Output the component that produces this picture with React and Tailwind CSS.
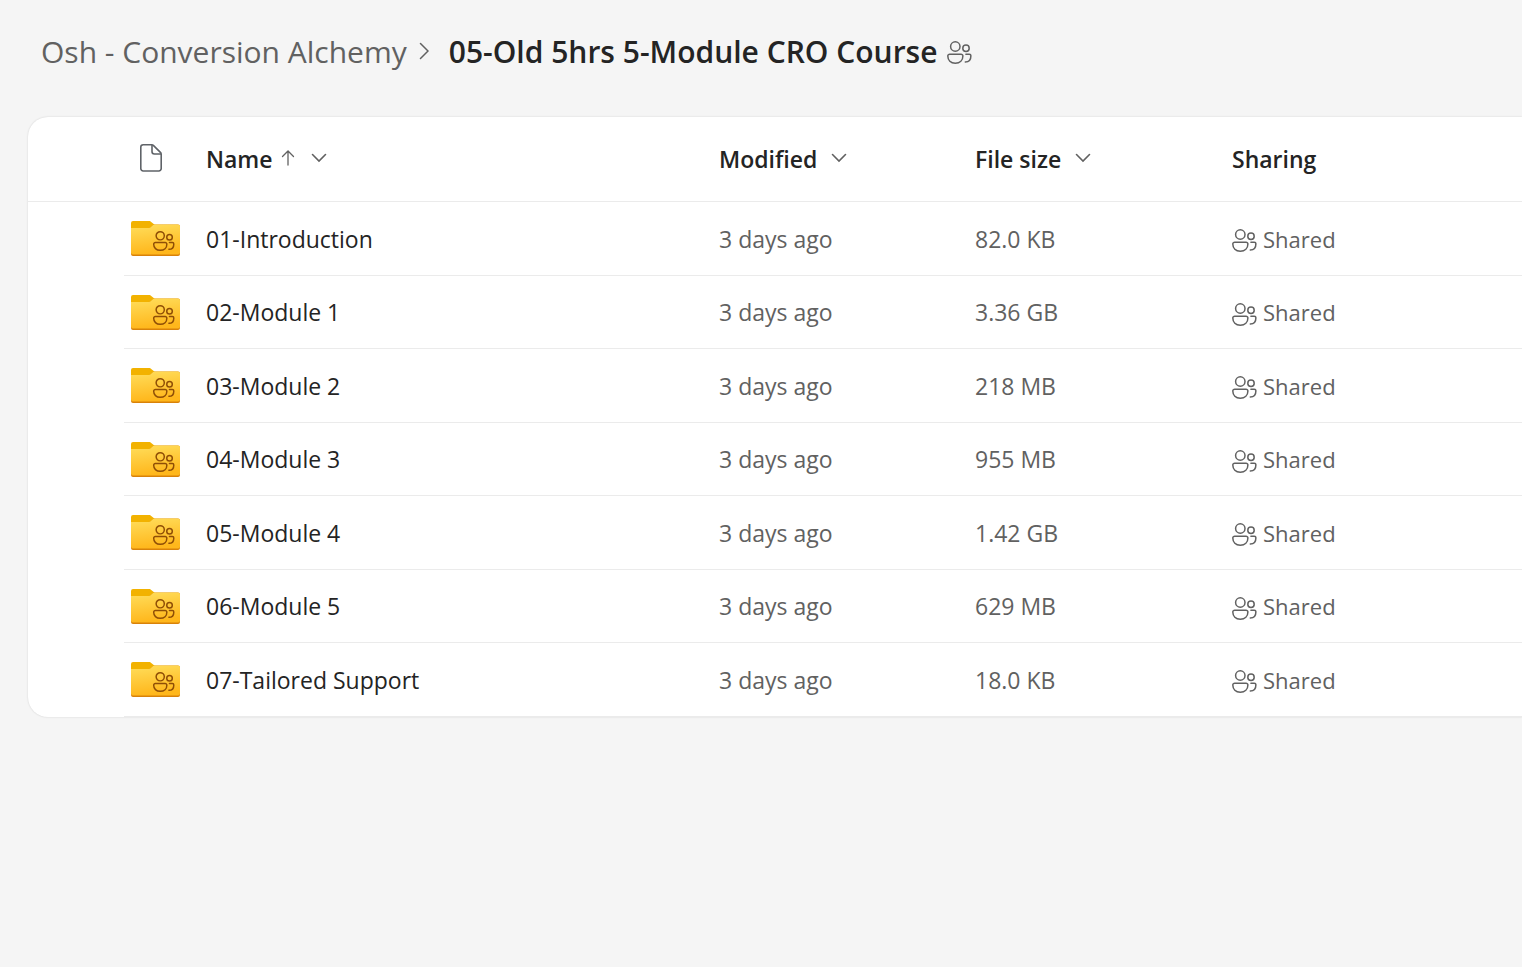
import React from 'react'

const folders = [
  { name: '01-Introduction', modified: '3 days ago', size: '82.0 KB' },
  { name: '02-Module 1', modified: '3 days ago', size: '3.36 GB' },
  { name: '03-Module 2', modified: '3 days ago', size: '218 MB' },
  { name: '04-Module 3', modified: '3 days ago', size: '955 MB' },
  { name: '05-Module 4', modified: '3 days ago', size: '1.42 GB' },
  { name: '06-Module 5', modified: '3 days ago', size: '629 MB' },
  { name: '07-Tailored Support', modified: '3 days ago', size: '18.0 KB' },
]

function PeoplePaths() {
  return (
    <>
      <circle cx="8.3" cy="5.5" r="4.7" />
      <circle cx="19" cy="7.2" r="3.2" />
      <path d="M2.7 13.2H14a1.9 1.9 0 0 1 1.9 1.9c0 4.2-3 7.1-7.6 7.1S.8 19.3.8 15.1a1.9 1.9 0 0 1 1.9-1.9z" />
      <path d="M18.9 13.2h3.4a1.6 1.6 0 0 1 1.6 1.6c0 3.9-2.1 6.3-5.6 6.3" />
    </>
  )
}

function PeopleIcon() {
  return (
    <svg viewBox="0 0 25 23" className="w-[25px] h-[23px] shrink-0" fill="none" stroke="currentColor" strokeWidth="1.5" strokeLinecap="round" aria-hidden="true">
      <PeoplePaths />
    </svg>
  )
}

function FolderIcon() {
  return (
    <svg viewBox="0 0 49 35" className="block w-[49px] h-[35px]" aria-hidden="true">
      <defs>
        <linearGradient id="folderBody" x1="0" y1="0" x2="0.2" y2="1">
          <stop offset="0" stopColor="#ffde5c" />
          <stop offset="1" stopColor="#ffb71c" />
        </linearGradient>
      </defs>
      <path d="M0 2a2 2 0 0 1 2-2h16c1 0 1.5.3 2.2.9L24 4v8H0z" fill="#f2b200" />
      <path d="M0 7h17c1.3 0 2-.3 2.9-1.1l1.6-1.5c.7-.6 1.3-.9 2.3-.9H47a2 2 0 0 1 2 2V33a2 2 0 0 1-2 2H2a2 2 0 0 1-2-2z" fill="#d98209" />
      <path d="M0 7h17c1.3 0 2-.3 2.9-1.1l1.6-1.5c.7-.6 1.3-.9 2.3-.9H47a2 2 0 0 1 2 2v26a2 2 0 0 1-2 2H2a2 2 0 0 1-2-2z" fill="url(#folderBody)" />
      <g transform="translate(22 10) scale(.87)" fill="none" stroke="#8f4e06" strokeWidth="1.7" strokeLinecap="round">
        <PeoplePaths />
      </g>
    </svg>
  )
}

function FileIcon() {
  return (
    <svg viewBox="0 0 22 28" className="block w-[22px] h-[28px]" fill="none" stroke="#5f6368" strokeWidth="1.6" strokeLinejoin="round" aria-hidden="true">
      <path d="M3.2.8h8.6c.7 0 1.3.3 1.8.8l6.8 6.8c.5.5.8 1.1.8 1.8v14.4a2.4 2.4 0 0 1-2.4 2.4H3.2a2.4 2.4 0 0 1-2.4-2.4V3.2A2.4 2.4 0 0 1 3.2.8z" />
      <path d="M12 1v6.600A2.400 2.400 0 0 0 14.400 10H21" />
    </svg>
  )
}

function ChevronDownIcon() {
  return (
    <svg viewBox="0 0 16 10" className="w-4 h-[10px]" fill="none" stroke="#616161" strokeWidth="1.6" strokeLinecap="round" aria-hidden="true">
      <path d="M1.5 1.5L8 8l6.500-6.500" />
    </svg>
  )
}

function ArrowUpIcon() {
  return (
    <svg viewBox="0 0 14 16" className="w-[14px] h-4" fill="none" stroke="#616161" strokeWidth="1.3" strokeLinecap="round" aria-hidden="true">
      <path d="M7 15V1M1.5 6.5L7 1l5.500 5.500" />
    </svg>
  )
}

function HeaderButton({ label, sorted }) {
  return (
    <button type="button" className="flex items-center font-semibold">
      {label}
      {sorted && <span className="ml-2 pb-0.5"><ArrowUpIcon /></span>}
      <span className={sorted ? 'ml-4 pb-0.5' : 'ml-3.5 pb-0.5'}><ChevronDownIcon /></span>
    </button>
  )
}

export default function App() {
  return (
    <div className="min-h-screen bg-[#f5f5f5] pl-7 font-['Open_Sans','Segoe_UI',sans-serif] text-[23px] leading-8 text-[#242424]">
      <nav aria-label="Breadcrumb" className="h-[117px] pt-8 pl-[13px]">
        <ol className="flex items-center text-[30px] leading-10 whitespace-nowrap">
          <li>
            <a href="#" className="text-[#616161]">Osh - Conversion Alchemy</a>
          </li>
          <li aria-hidden="true" className="pl-3 pr-5">
            <svg viewBox="0 0 10 18" className="mb-0.5 w-[10px] h-[18px]" fill="none" stroke="#616161" strokeWidth="1.5" strokeLinecap="round">
              <path d="M1.5 1.5L9 9l-7.500 7.500" />
            </svg>
          </li>
          <li className="flex items-center gap-2.5 font-semibold" aria-current="page">
            05-Old 5hrs 5-Module CRO Course
            <span className="text-[#616161]"><PeopleIcon /></span>
          </li>
        </ol>
      </nav>

      <main className="overflow-hidden rounded-l-[20px] bg-white shadow-[0_0_2px_rgba(0,0,0,0.16)]">
        <table className="w-full table-fixed border-separate border-spacing-0 text-left whitespace-nowrap">
          <colgroup>
            <col className="w-24" />
            <col className="w-[82px]" />
            <col className="w-[513px]" />
            <col className="w-64" />
            <col className="w-[257px]" />
            <col />
          </colgroup>
          <thead>
            <tr className="h-[85px] *:border-b *:border-[#ebebeb] *:p-0">
              <td></td>
              <th scope="col" aria-label="Type">
                <div className="pb-0.5 pl-4"><FileIcon /></div>
              </th>
              <th scope="col"><HeaderButton label="Name" sorted /></th>
              <th scope="col"><HeaderButton label="Modified" /></th>
              <th scope="col"><HeaderButton label="File size" /></th>
              <th scope="col" className="font-semibold">Sharing</th>
            </tr>
          </thead>
          <tbody className="text-[#616161]">
            {folders.map(f => (
              <tr key={f.name} className="h-[74px] even:h-[73px] *:border-[#ebebeb] *:p-0 *:not-first:border-b">
                <td></td>
                <td className="pl-[7px]!"><FolderIcon /></td>
                <td><a href="#" className="text-[#242424]">{f.name}</a></td>
                <td>{f.modified}</td>
                <td>{f.size}</td>
                <td>
                  <div className="flex items-center gap-1.5 text-[22px]">
                    <span className="pt-1"><PeopleIcon /></span>
                    Shared
                  </div>
                </td>
              </tr>
            ))}
          </tbody>
        </table>
      </main>
    </div>
  )
}
